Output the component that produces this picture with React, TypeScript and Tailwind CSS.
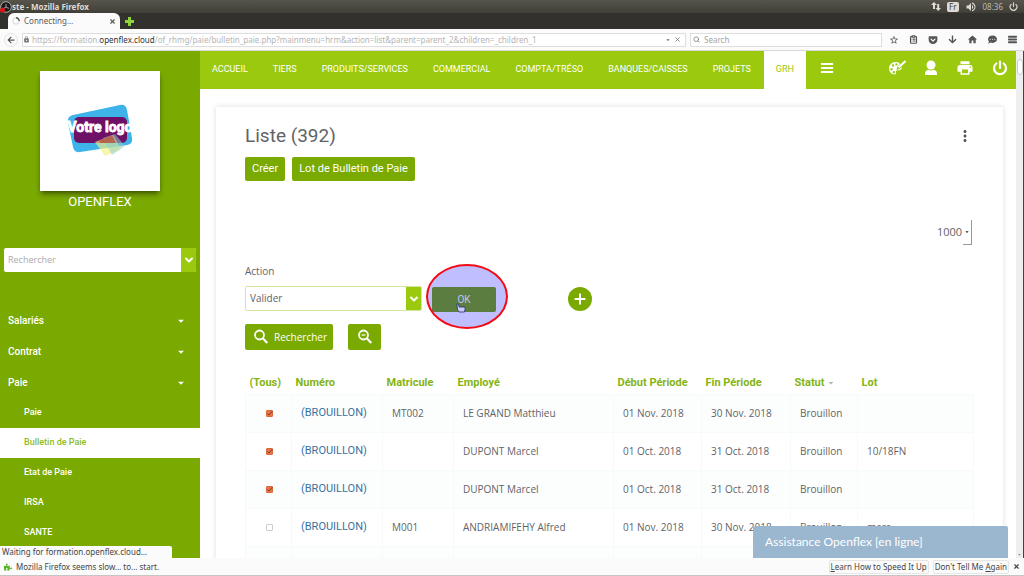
import React from "react";
import {
  MdArrowDropDown,
  MdHome,
  MdLock,
  MdMoreVert,
  MdPrint,
  MdStarBorder,
  MdVolumeUp,
} from "react-icons/md";
import { FaArrowDown, FaArrowLeft, FaGetPocket, FaCommentDots, FaPuzzlePiece } from "react-icons/fa";
import { LuChevronDown, LuClipboardList, LuMenu, LuPlus, LuPower, LuSearch, LuX } from "react-icons/lu";

const navItems = [
  "ACCUEIL",
  "TIERS",
  "PRODUITS/SERVICES",
  "COMMERCIAL",
  "COMPTA/TRÉSO",
  "BANQUES/CAISSES",
  "PROJETS",
  "GRH",
];

const menuItems = ["Salariés", "Contrat", "Paie"];
const subItems = ["Paie", "Bulletin de Paie", "Etat de Paie", "IRSA", "SANTE"];

interface Payslip {
  checked: boolean;
  matricule: string;
  name: string;
  start: string;
  end: string;
  lot: string;
}

const payslips: Payslip[] = [
  { checked: true, matricule: "MT002", name: "LE GRAND Matthieu", start: "01 Nov. 2018", end: "30 Nov. 2018", lot: "" },
  { checked: true, matricule: "", name: "DUPONT Marcel", start: "01 Oct. 2018", end: "31 Oct. 2018", lot: "10/18FN" },
  { checked: true, matricule: "", name: "DUPONT Marcel", start: "01 Oct. 2018", end: "31 Oct. 2018", lot: "" },
  { checked: false, matricule: "M001", name: "ANDRIAMIFEHY Alfred", start: "01 Nov. 2018", end: "30 Nov. 2018", lot: "mars" },
];

const BrowserChrome = () => {
  return (
    <div className="shrink-0 font-['Noto_Sans',sans-serif] text-[8px]">
      <div className="flex h-[13px] items-center bg-linear-to-b from-[#56544b] to-[#403f39] pr-[6px] text-[#dfdbd2]">
        <svg className="size-3 shrink-0" viewBox="0 0 12 12">
          <circle cx="6" cy="6" r="5.3" fill="#1c1a1c" stroke="#c9c7c3" strokeWidth="0.8" />
          <path d="M6 6V3M6 6l3 1.5M6 6L3.5 7.5" stroke="#8b8986" strokeWidth="1.2" />
          <circle cx="2.6" cy="9.2" r="2.4" fill="#f00f0f" />
        </svg>
        <h1 className="font-bold">ste - Mozilla Firefox</h1>
        <div className="ml-auto flex items-center gap-[6px]">
          <svg className="h-[9px] w-[10px]" viewBox="0 0 10 9" fill="#dfdbd2">
            <path d="M3 0l3 3H4v4H2V3H0zM7.2 9l-2.7-3h1.7V2h2v4H10z" />
          </svg>
          <span className="rounded-xs bg-[#dfdbd2] px-[2px] leading-[10px] text-[#3c3b37]">Fr</span>
          <MdVolumeUp className="size-3" />
          <span className="text-[#bdbab2]">08:36</span>
          <LuPower className="size-[9px]" strokeWidth={3} />
        </div>
      </div>
      <div className="flex h-4 items-center bg-[#33312d] pl-2">
        <div className="flex h-full w-[112px] items-center gap-1 rounded-t-md bg-[#fbfbfb] px-1 text-[#5a5a5a]">
          <svg className="size-2" viewBox="0 0 8 8" fill="none">
            <circle cx="4" cy="4" r="3.2" stroke="#d5d5d5" />
            <path d="M4 .8A3.2 3.2 0 0 1 7.2 4" stroke="#555" strokeWidth="1.4" />
          </svg>
          <span>Connecting…</span>
          <button aria-label="Fermer l'onglet" className="ml-auto">
            <LuX className="size-[7px]" strokeWidth={4} />
          </button>
        </div>
        <button aria-label="Nouvel onglet" className="ml-[5px]">
          <svg className="size-[9px]" viewBox="0 0 9 9">
            <path d="M3 0h3v3h3v3H6v3H3V6H0V3h3z" fill="#8fd43a" />
          </svg>
        </button>
      </div>
      <div className="flex h-[22px] items-center gap-1 border-b border-[#d8d8d8] bg-[#fbfbfb] pr-[6px] pl-1 text-[#555]">
        <button aria-label="Précédent" className="grid size-[14px] place-items-center rounded-full border border-[#e4e4e4]">
          <FaArrowLeft className="size-2" />
        </button>
        <div className="flex h-[14px] min-w-0 flex-1 items-center gap-[2px] border border-[#dedede] bg-white pr-1 text-[#b5b5b5]">
          <MdLock className="size-[7px] shrink-0 text-[#777]" />
          <span className="truncate">
            https://formation.<span className="text-[#333]">openflex.cloud</span>
            /of_rhmg/paie/bulletin_paie.php?mainmenu=hrm&amp;action=list&amp;parent=parent_2&amp;children=_children_1
          </span>
          <MdArrowDropDown className="ml-auto size-2 shrink-0 text-[#666]" />
          <LuX className="size-[7px] shrink-0 text-[#777]" strokeWidth={3} />
        </div>
        <label className="flex h-[14px] w-[192px] items-center gap-1 border border-[#dedede] bg-white px-[2px]">
          <LuSearch className="size-[7px] text-[#888]" strokeWidth={3} />
          <input aria-label="Search" placeholder="Search" className="min-w-0 flex-1 placeholder:text-[#a5a5a5]" />
        </label>
        <div className="flex items-center gap-[10px] pl-[3px]">
          <MdStarBorder className="size-[10px]" />
          <LuClipboardList className="size-[9px]" strokeWidth={3} />
          <FaGetPocket className="size-[10px]" />
          <FaArrowDown className="size-[9px]" />
          <MdHome className="size-[11px]" />
          <FaCommentDots className="size-[9px]" />
          <LuMenu className="size-[11px]" strokeWidth={4} />
        </div>
      </div>
    </div>
  );
};

const Logo = () => {
  return (
    <svg className="h-14 w-[72px]" viewBox="0 0 72 56">
      <path d="M9 12L56 2q6-1 7 5l5 28q1 6-5 7L16 49q-6 1-7-5L4 20q-1-7 5-8z" fill="#3db3ea" />
      <rect x="10" y="14" width="53" height="26" rx="5" fill="#6f1067" />
      <path d="M31 39l18-7 8 14-16 7z" fill="#f2f082" opacity="0.65" />
      <path d="M39 35l12-4 10 12-13 9z" fill="#8fd0c4" opacity="0.55" />
      <path d="M35 38l13-6 4 8H36z" fill="#b9513a" opacity="0.8" />
      <text
        x="36"
        y="29"
        textAnchor="middle"
        strokeWidth="0.8"
        className="fill-white stroke-white font-['Liberation_Sans_Narrow','Roboto',sans-serif] text-[14px] font-bold"
      >
        Votre logo
      </text>
    </svg>
  );
};

const Sidebar = () => {
  return (
    <aside className="flex w-[200px] shrink-0 flex-col bg-[#7aa900] text-white">
      <div className="mx-auto mt-5 grid size-[120px] place-items-center bg-white shadow-md shadow-black/40">
        <Logo />
      </div>
      <p className="mt-px text-center text-[13px] leading-5">OPENFLEX</p>
      <div className="mx-1 mt-9 flex h-6 overflow-hidden rounded-xs bg-white">
        <input
          aria-label="Rechercher"
          placeholder="Rechercher"
          className="min-w-0 flex-1 px-1 font-['Open_Sans',sans-serif] text-[9px] text-[#555] placeholder:text-[#aaa]"
        />
        <button aria-label="Ouvrir la recherche" className="grid w-[15px] place-items-center bg-[#9ac90e]">
          <LuChevronDown className="size-3" strokeWidth={4} />
        </button>
      </div>
      <nav className="mt-[33px] text-[10px] font-medium">
        {menuItems.map((item) => (
          <a key={item} href="#" className="flex h-[31px] items-center justify-between pr-3 pl-2">
            {item}
            <MdArrowDropDown className="size-[14px]" />
          </a>
        ))}
        {subItems.map((item) => (
          <a
            key={item}
            href="#"
            className={`flex h-[30px] items-center pl-6 text-[9px] ${
              item === "Bulletin de Paie" ? "bg-white text-[#8fbb1c]" : ""
            }`}
          >
            {item}
          </a>
        ))}
      </nav>
    </aside>
  );
};

const TopBar = () => {
  return (
    <header className="flex h-[38px] items-stretch bg-[#9ac90e] text-white">
      <nav className="flex gap-px text-[9px]">
        {navItems.map((item) => (
          <a
            key={item}
            href="#"
            className={`flex items-center px-3 ${item === "GRH" ? "bg-white text-[#9ac90e]" : ""}`}
          >
            {item}
          </a>
        ))}
      </nav>
      <button aria-label="Menu" className="px-[13px] pb-1">
        <LuMenu className="size-4" strokeWidth={3} />
      </button>
      <div className="ml-auto flex items-center gap-[18px] pr-2 pb-1">
        <button aria-label="Thème">
          <svg className="h-4 w-[18px]" viewBox="0 0 18 16">
            <path
              fill="currentColor"
              fillRule="evenodd"
              d="M7.5 2C3.600 2 1 5 1 8.600 1 12 3.500 14.500 6.500 14.500c1.600 0 1.500-1.200 1.300-2.200-.2-1.200.6-2 1.800-2 2.300.2 4.400-.8 4.400-3.300L11 9.200 8.500 9.700l.8-2.600L12 4C10.900 2.600 9.300 2 7.500 2zM5 4.300a1.200 1.200 0 1 1 0 2.400 1.200 1.200 0 0 1 0-2.400zM3.500 8a1.200 1.200 0 1 1 0 2.400A1.200 1.200 0 0 1 3.500 8zM8.500 3.200a1.200 1.200 0 1 1 0 2.400 1.200 1.200 0 0 1 0-2.400zM5.800 11a1.200 1.200 0 1 1 0 2.400 1.200 1.200 0 0 1 0-2.400z"
            />
            <path d="M17.500 1l-7 6.500" stroke="currentColor" strokeWidth="2" />
          </svg>
        </button>
        <button aria-label="Utilisateur">
          <svg className="h-4 w-[14px]" viewBox="0 0 14 16" fill="currentColor">
            <circle cx="7" cy="5" r="4.500" />
            <path d="M1 15v-1.500C1 11 3.200 10 4.500 9.800c1.500 1 3.500 1 5 0C10.800 10 13 11 13 13.500V15z" />
          </svg>
        </button>
        <button aria-label="Imprimer">
          <MdPrint className="size-[18px]" />
        </button>
        <button aria-label="Déconnexion">
          <svg className="size-4" viewBox="0 0 16 16" fill="none" stroke="currentColor" strokeWidth="2.200" strokeLinecap="round">
            <path d="M8 1.500v6.500M4.300 3.500a6 6 0 1 0 7.400 0" />
          </svg>
        </button>
      </div>
    </header>
  );
};

const RowCheckbox = (props: { checked: boolean; label: string }) => {
  return (
    <span className="mx-auto grid size-[7px]">
      <input
        type="checkbox"
        aria-label={props.label}
        defaultChecked={props.checked}
        className="peer size-[7px] appearance-none rounded-[1px] border border-[#ccc] bg-white [grid-area:1/1] checked:border-[#d9693f] checked:bg-[#ec7446]"
      />
      <svg
        className="pointer-events-none size-[7px] opacity-0 [grid-area:1/1] peer-checked:opacity-100"
        viewBox="0 0 7 7"
        fill="none"
      >
        <path d="M1.500 3.500l1.500 1.500L6.500 1" stroke="#7a3a26" strokeWidth="1" />
      </svg>
    </span>
  );
};

const PayslipTable = () => {
  return (
    <table className="mt-3 w-full table-fixed border-collapse text-left font-['Open_Sans',sans-serif] text-[10px] text-[#5f6468]">
      <colgroup>
        <col className="w-[46px]" />
        <col className="w-[91px]" />
        <col className="w-[71px]" />
        <col className="w-[160px]" />
        <col className="w-[88px]" />
        <col className="w-[89px]" />
        <col className="w-[67px]" />
        <col />
      </colgroup>
      <thead className="font-['Roboto',sans-serif] text-[11px] whitespace-nowrap text-[#84b414]">
        <tr className="h-8 *:pt-[10px] *:pl-1 *:font-bold">
          <th>(Tous)</th>
          <th>Numéro</th>
          <th>Matricule</th>
          <th>Employé</th>
          <th>Début Période</th>
          <th>Fin Période</th>
          <th>
            <span className="flex items-center">
              Statut
              <MdArrowDropDown className="size-3 text-[#b5b5b5]" />
            </span>
          </th>
          <th>Lot</th>
        </tr>
      </thead>
      <tbody>
        {payslips.map((row, i) => (
          <tr
            key={i}
            className="h-[38px] odd:bg-[#fcfefe] *:border *:border-[#f5fafb] *:pl-[9px]"
          >
            <td className="pr-[7px]">
              <RowCheckbox checked={row.checked} label={`Sélectionner ${row.name}`} />
            </td>
            <td className="font-['Roboto',sans-serif] text-[11px]">
              <a href="#" className="text-[#3b719f]">
                (BROUILLON)
              </a>
            </td>
            <td>{row.matricule}</td>
            <td>{row.name}</td>
            <td>{row.start}</td>
            <td>{row.end}</td>
            <td>Brouillon</td>
            <td>{row.lot}</td>
          </tr>
        ))}
        <tr className="h-[38px] bg-[#fcfefe] *:border *:border-[#f5fafb]">
          <td />
          <td />
          <td />
          <td />
          <td />
          <td />
          <td />
          <td />
        </tr>
      </tbody>
    </table>
  );
};

const ListCard = () => {
  return (
    <section className="mt-[18px] mr-[13px] ml-4 bg-white px-[29px] pt-[17px] shadow-[0_0_5px_rgba(60,60,90,0.18)]">
      <div className="flex items-center justify-between">
        <h2 className="text-[19px] leading-6 text-[#5f6468]">Liste (392)</h2>
        <button aria-label="Options" className="text-[#50565b]">
          <MdMoreVert className="size-[18px]" />
        </button>
      </div>
      <div className="mt-[9px] flex gap-[7px] text-[11px] text-white">
        <button className="h-6 rounded-xs bg-[#7aa900] px-[7px]">Créer</button>
        <button className="h-6 rounded-xs bg-[#7aa900] px-[7px]">Lot de Bulletin de Paie</button>
      </div>
      <div className="mt-[39px] flex justify-end pr-[2px]">
        <div className="flex h-[25px] items-center border-r border-[#999] font-['Open_Sans',sans-serif] text-[11px] text-[#5f6468]">
          <select aria-label="Lignes par page" className="appearance-none">
            <option>1000</option>
          </select>
          <span className="flex h-full w-2 items-center border-b border-[#999] text-[#222]">
            <MdArrowDropDown className="size-2" />
          </span>
        </div>
      </div>
      <label htmlFor="action" className="mt-[18px] block font-['Open_Sans',sans-serif] text-[10px] leading-4 text-[#5f6468]">
        Action
      </label>
      <div className="mt-[7px] flex h-[25px] items-center">
        <div className="flex h-full w-[177px] overflow-hidden rounded-xs border border-[#d3e6a0]">
          <select
            id="action"
            className="min-w-0 flex-1 appearance-none bg-white px-1 font-['Open_Sans',sans-serif] text-[10px] text-[#5f6468]"
          >
            <option>Valider</option>
          </select>
          <span className="grid w-[15px] place-items-center bg-[#9ac90e] text-white">
            <LuChevronDown className="size-3" strokeWidth={4} />
          </span>
        </div>
        <div className="relative ml-[10px] h-full w-16">
          <button className="h-full w-full rounded-xs bg-[#7aa900] text-[10px] text-white">OK</button>
          <span className="pointer-events-none absolute -top-[22px] -left-[6px] h-[65px] w-[82px] rounded-[50%] border-2 border-[#f40b14] bg-[#0000ff]/25" />
          {/* hand cursor */}
          <svg className="pointer-events-none absolute top-[17px] left-6 size-[10px]" viewBox="0 0 10 10">
            <path d="M.8 1h1.600l.8 3H8.500l.7 1.500L8.500 9H3L1.500 6.500z" fill="#c9c9f4" stroke="#22306e" strokeWidth="0.800" />
          </svg>
        </div>
        <button aria-label="Ajouter" className="ml-[72px] grid size-6 place-items-center rounded-full bg-[#7aa900] text-white">
          <LuPlus className="size-4" strokeWidth={3} />
        </button>
      </div>
      <div className="mt-[13px] flex gap-[15px] font-['Open_Sans',sans-serif] text-[10px] text-white">
        <button className="flex h-[26px] items-center gap-[5px] rounded-xs bg-[#7aa900] pr-[6px] pl-2">
          <svg className="size-4" viewBox="0 0 16 16" fill="none" stroke="currentColor">
            <circle cx="6.500" cy="6" r="4.500" strokeWidth="1.800" />
            <path d="M9.700 9.300l4.600 4.700" strokeWidth="2.200" />
          </svg>
          Rechercher
        </button>
        <button aria-label="Effacer les filtres" className="grid h-[26px] w-[33px] place-items-center rounded-xs bg-[#7aa900]">
          <svg className="size-4" viewBox="0 0 16 16" fill="none" stroke="currentColor">
            <circle cx="6.500" cy="6" r="4.500" strokeWidth="1.800" />
            <path d="M4.500 6h4" strokeWidth="1.200" />
            <path d="M9.700 9.300l4.600 4.700" strokeWidth="2.200" />
          </svg>
        </button>
      </div>
      <PayslipTable />
    </section>
  );
};

const NotificationBar = () => {
  return (
    <footer className="flex h-[18px] shrink-0 items-center gap-1 border-b border-[#c5c5c5] bg-[#fbfbfb] px-1 font-['Noto_Sans',sans-serif] text-[8px] text-[#444]">
      <FaPuzzlePiece className="size-2 text-[#57b52a]" />
      <p>Mozilla Firefox seems slow… to… start.</p>
      <button className="ml-auto h-[14px] rounded-xs border border-[#e6e6e6] px-px">
        <u>L</u>earn How to Speed It Up
      </button>
      <button className="h-[14px] rounded-xs border border-[#e6e6e6] px-px">
        Don't Tell Me <u>A</u>gain
      </button>
      <button aria-label="Fermer">
        <LuX className="size-[7px]" strokeWidth={4} />
      </button>
    </footer>
  );
};

const App = () => {
  return (
    <div className="flex h-screen flex-col overflow-hidden bg-white font-['Roboto',sans-serif]">
      <BrowserChrome />
      <div className="relative flex min-h-0 flex-1 overflow-hidden">
        <Sidebar />
        <main className="min-w-0 flex-1">
          <TopBar />
          <ListCard />
        </main>
        <div className="flex w-2 shrink-0 flex-col items-center justify-between border-r border-[#44423f] bg-[#efefef] text-[#888]">
          <div className="mt-2 h-4 w-[6px] rounded-sm border border-[#ccc] bg-white" />
          <MdArrowDropDown className="size-[7px]" />
        </div>
        <div className="absolute right-4 bottom-0 flex h-8 w-[255px] items-center rounded-t-xs bg-[#9bb6cf] px-3 font-['Lato',sans-serif] text-[12px] text-white">
          Assistance Openflex [en ligne]
        </div>
        <p className="absolute bottom-0 left-0 h-3 w-[172px] rounded-tr-xs bg-[#fbfbfb] pl-[2px] font-['Noto_Sans',sans-serif] text-[8px] leading-3 text-[#444]">
          Waiting for formation.openflex.cloud…
        </p>
      </div>
      <NotificationBar />
    </div>
  );
};

export default App;
